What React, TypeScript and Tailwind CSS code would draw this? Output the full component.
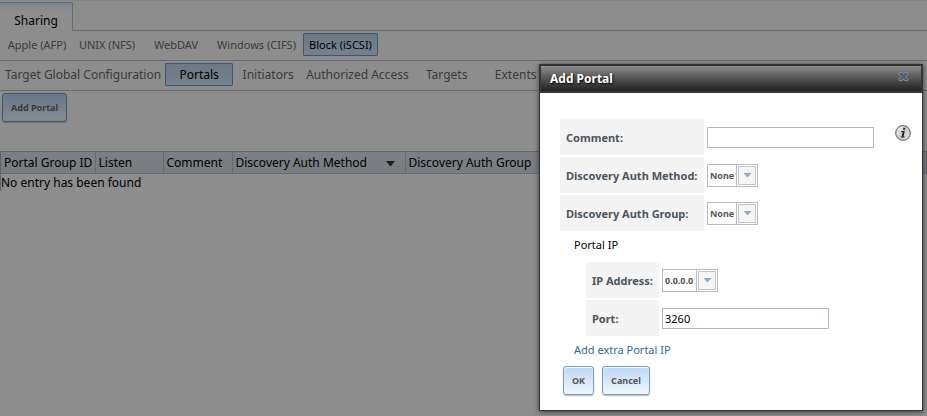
import { useState } from "react";
import type { ReactNode } from "react";

type Tab = { name: string; width: string };

const services: Tab[] = [
  { name: "Apple (AFP)", width: "min-w-[70px]" },
  { name: "UNIX (NFS)", width: "min-w-[68px]" },
  { name: "WebDAV", width: "min-w-[68px]" },
  { name: "Windows (CIFS)", width: "min-w-[91px]" },
  { name: "Block (iSCSI)", width: "min-w-[75px]" },
];

const sections: Tab[] = [
  { name: "Target Global Configuration", width: "min-w-[162px]" },
  { name: "Portals", width: "min-w-[68px]" },
  { name: "Initiators", width: "min-w-[68px]" },
  { name: "Authorized Access", width: "min-w-[108px]" },
  { name: "Targets", width: "min-w-[68px]" },
  { name: "Extents", width: "min-w-[68px]" },
];

function TabRow({ items, active, size }: { items: Tab[]; active: string; size: string }) {
  return (
    <nav className={`flex h-[30px] items-start gap-px border-b border-[#696a73] pl-0.5 pt-0.5 ${size}`}>
      {items.map(({ name, width }) => (
        <button
          key={name}
          type="button"
          className={`flex h-[23px] shrink-0 items-start justify-center whitespace-nowrap rounded-[1px] border px-0.5 pt-[3px] leading-4 ${width} ${
            name === active
              ? "border-[#3f566c] bg-linear-to-b from-[#6b7885] to-[#77828e] text-black"
              : "border-transparent text-[#3b3b3b]"
          }`}
        >
          {name}
        </button>
      ))}
    </nav>
  );
}

function FormRow({ label, id, labelWidth, children }: { label: string; id: string; labelWidth: string; children: ReactNode }) {
  return (
    <div className="flex h-9 gap-[3px]">
      <label htmlFor={id} className={`flex shrink-0 items-center bg-[#f4f4f4] pl-1.5 pt-0.5 font-bold leading-4 text-[#4c5561] ${labelWidth}`}>
        {label}
      </label>
      <div className="flex items-center pt-px">{children}</div>
    </div>
  );
}

function DropDown({ id, value, width }: { id: string; value: string; width: string }) {
  return (
    <div className={`relative h-[23px] border border-[#b5bcc7] bg-white ${width}`}>
      <select id={id} defaultValue={value} className="h-full w-full appearance-none bg-transparent pl-0.5 text-[9px] font-bold text-[#555] outline-none">
        <option>{value}</option>
      </select>
      <div className="pointer-events-none absolute inset-y-0 right-0 w-[21px] border-l border-[#b5bcc7] p-px">
        <div className="flex h-full items-center justify-center border border-[#c4c4c4] bg-[#f5f5f5] pb-0.5">
          <svg width="7" height="4" viewBox="0 0 7 4" aria-hidden="true">
            <path d="M0 0h7v.500L4 4H3L0 .500z" fill="#8eaad0" />
          </svg>
        </div>
      </div>
    </div>
  );
}

const fieldClass = "h-[21px] w-[167px] border border-[#b3b6c8] bg-white px-0.5 text-black outline-none";
const actionClass =
  "h-[29px] rounded-[3px] border border-[#759dc0] bg-linear-to-b from-[#bcd8f4] to-[#f1f6fd] px-2 text-[9px] font-bold text-[#555] shadow-[inset_0_1px_1px_#ffffff,0_1px_1px_#bbbbbb]";

function AddPortal({ onClose }: { onClose: () => void }) {
  return (
    <section
      role="dialog"
      aria-labelledby="dialog-title"
      className="absolute right-1 top-16 w-[384px] border border-[#333] bg-white shadow-[0_1px_5px_rgba(0,0,0,0.6)]"
    >
      <header className="flex h-7 items-center justify-between border border-b-2 border-[#363636] bg-linear-to-b from-[#8d8d8d] via-[#555] via-50% to-[#222] pl-[9px] pr-3">
        <h1 id="dialog-title" className="text-[12px] font-bold text-white [text-shadow:1px_1px_2px_#000]">
          Add Portal
        </h1>
        <button type="button" aria-label="Close" onClick={onClose} className="mb-1">
          <svg width="11" height="9" viewBox="0 0 11 9" aria-hidden="true">
            <path d="M1 .5h3.500l1 1.800 1-1.800H10v1.600L7.600 4.500 10 7v1.500H6.500l-1-1.800-1 1.800H1V7l2.400-2.500L1 2.100z" fill="#4b5f70" stroke="#8795a0" strokeWidth=".8" />
          </svg>
        </button>
      </header>
      <form className="pb-[15px] pl-5 pr-[11px] pt-[26px]" onSubmit={(e) => e.preventDefault()}>
        <div className="flex flex-col gap-0.5">
          <div className="flex justify-between">
            <FormRow label="Comment:" id="comment" labelWidth="w-36">
              <input id="comment" type="text" className={fieldClass} />
            </FormRow>
            <button type="button" aria-label="Comment help" className="mt-1.5 h-4">
              <svg width="16" height="16" viewBox="0 0 16 16" aria-hidden="true">
                <defs>
                  <linearGradient id="help-shade" x1="0" y1="0" x2="1" y2="1">
                    <stop offset="0" stopColor="#fff" />
                    <stop offset=".5" stopColor="#ccc" />
                    <stop offset="1" stopColor="#eee" />
                  </linearGradient>
                </defs>
                <circle cx="8" cy="8" r="7.300" fill="url(#help-shade)" stroke="#777" strokeWidth="1.200" />
                <path d="M8.200 2.800h2v2h-2zM6 6h3.800L8.500 11.500h1.200v1H5.800v-1h.9L7.700 7H6z" fill="#222" />
              </svg>
            </button>
          </div>
          <FormRow label="Discovery Auth Method:" id="method" labelWidth="w-36">
            <DropDown id="method" value="None" width="w-[51px]" />
          </FormRow>
          <FormRow label="Discovery Auth Group:" id="group" labelWidth="w-36">
            <DropDown id="group" value="None" width="w-[51px]" />
          </FormRow>
        </div>
        <fieldset>
          <legend className="ml-3.5 h-[31px] pt-1.5 leading-4">Portal IP</legend>
          <div className="ml-[26px] flex flex-col gap-0.5">
            <FormRow label="IP Address:" id="address" labelWidth="w-[73px]">
              <DropDown id="address" value="0.0.0.0" width="w-14" />
            </FormRow>
            <FormRow label="Port:" id="port" labelWidth="w-[73px]">
              <input id="port" type="text" defaultValue="3260" className={fieldClass} />
            </FormRow>
          </div>
        </fieldset>
        <a href="#extra" className="ml-3.5 mt-1.5 block w-fit leading-4 text-[#336699]">
          Add extra Portal IP
        </a>
        <div className="ml-[3px] mt-2 flex gap-2">
          <button type="submit" className={actionClass}>OK</button>
          <button type="button" onClick={onClose} className={actionClass}>Cancel</button>
        </div>
      </form>
    </section>
  );
}

const columns = [
  { name: "Portal Group ID", width: "w-[94px]" },
  { name: "Listen", width: "w-[68px]" },
  { name: "Comment", width: "w-[69px]" },
  { name: "Discovery Auth Method", width: "w-[173px]", sorted: true },
  { name: "Discovery Auth Group", width: "" },
];

export default function App() {
  const [open, setOpen] = useState(true);
  return (
    <div className="relative min-h-screen overflow-hidden bg-[#8d8d8d] font-['Noto_Sans','Open_Sans',sans-serif] text-[11px] text-black">
      <div className="flex h-[31px] items-end border-b border-[#696a73] shadow-[inset_0_1px_0_#858585]">
        <button
          type="button"
          className="-mb-px h-[29px] w-[73px] border-r border-t border-[#696a73] bg-linear-to-b from-[#758391] to-[#8d8d8d] to-25% pt-2 text-[12px] leading-4"
        >
          Sharing
        </button>
      </div>
      <TabRow items={services} active="Block (iSCSI)" size="text-[11px]" />
      <TabRow items={sections} active="Portals" size="text-[12px]" />
      <button
        type="button"
        onClick={() => setOpen(true)}
        className="ml-0.5 mt-0.5 block h-[29px] rounded-[3px] border border-[#40566a] bg-linear-to-b from-[#68788a] to-[#868a8f] px-2 text-[9px] font-bold text-[#3a3a3a] shadow-[0_1px_1px_#707070]"
      >
        Add Portal
      </button>
      <div className="mt-[29px] border-l border-t border-[#626567] text-[12px]">
        <table className="w-full table-fixed border-collapse text-left">
          <thead>
            <tr className="h-[21px] border-b border-[#666b70] bg-linear-to-b from-[#7c8085] to-[#797d82]">
              {columns.map((c) => (
                <th key={c.name} scope="col" className={`border-r border-[#686c70] px-[3px] pb-0 pt-0.5 font-normal ${c.width}`}>
                  <div className="flex items-center justify-between whitespace-nowrap leading-4">
                    {c.name}
                    {c.sorted && (
                      <svg className="mr-[7px]" width="9" height="5" viewBox="0 0 9 5" aria-hidden="true">
                        <path d="M0 0h9L5 5H4z" fill="#1d1d1d" />
                      </svg>
                    )}
                  </div>
                </th>
              ))}
            </tr>
          </thead>
          <tbody>
            <tr>
              <td colSpan={5} className="px-0 pb-0 pt-px leading-4">No entry has been found</td>
            </tr>
          </tbody>
        </table>
      </div>
      {open && <AddPortal onClose={() => setOpen(false)} />}
    </div>
  );
}
